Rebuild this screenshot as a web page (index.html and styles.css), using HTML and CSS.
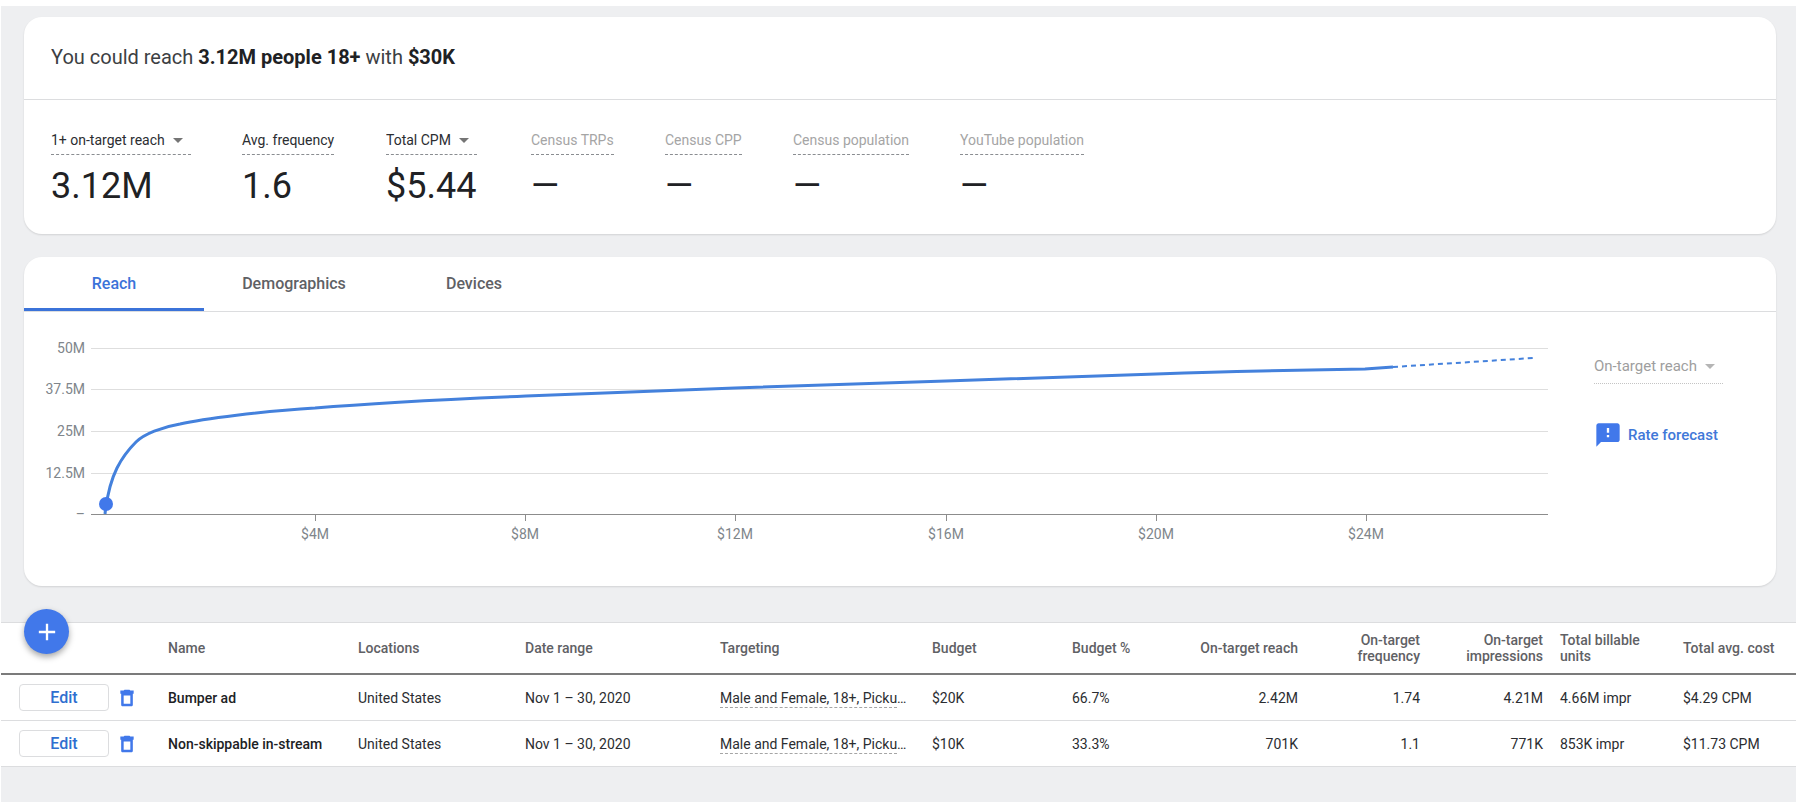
FILE: index.html
```html
<!DOCTYPE html>
<html lang="en">

<head>
    <meta charset="UTF-8">
    <meta name="viewport" content="width=device-width, initial-scale=1.0">
    <title>Reach Planner</title>
    <link rel="stylesheet" href="styles.css">
</head>

<body>
    <main class="page">
        <section class="card">
            <h1 class="headline">You could reach <b>3.12M people 18+</b> with <b>$30K</b></h1>
            <div class="metrics">
                <div class="metric">
                    <span class="dropdown">
                        <select aria-label="Reach metric">
                            <option>1+ on-target reach</option>
                        </select>
                    </span>
                    <span class="value">3.12M</span>
                </div>
                <div class="metric">
                    <span class="label">Avg. frequency</span>
                    <span class="value">1.6</span>
                </div>
                <div class="metric">
                    <span class="dropdown">
                        <select aria-label="Cost metric">
                            <option>Total CPM</option>
                        </select>
                    </span>
                    <span class="value">$5.44</span>
                </div>
                <div class="metric">
                    <span class="label muted">Census TRPs</span>
                    <span class="value">—</span>
                </div>
                <div class="metric">
                    <span class="label muted">Census CPP</span>
                    <span class="value">—</span>
                </div>
                <div class="metric">
                    <span class="label muted">Census population</span>
                    <span class="value">—</span>
                </div>
                <div class="metric">
                    <span class="label muted">YouTube population</span>
                    <span class="value">—</span>
                </div>
            </div>
        </section>

        <section class="card">
            <nav class="tabs">
                <button class="tab active">Reach</button>
                <button class="tab">Demographics</button>
                <button class="tab">Devices</button>
            </nav>
            <div class="forecast">
                <svg class="chart" viewBox="0 0 1524 274" role="img" aria-label="Reach by budget">
                    <g class="grid">
                        <path d="M67 36H1524M67 77H1524M67 119H1524M67 161H1524" />
                    </g>
                    <g class="axis">
                        <path d="M67 202H1524M291 202V209M501 202V209M711 202V209M922 202V209M1132 202V209M1342 202V209" />
                    </g>
                    <g class="y-labels">
                        <text x="61" y="41">50M</text>
                        <text x="61" y="82">37.5M</text>
                        <text x="61" y="124">25M</text>
                        <text x="61" y="166">12.5M</text>
                        <text x="61" y="207">–</text>
                    </g>
                    <g class="x-labels">
                        <text x="291" y="227">$4M</text>
                        <text x="501" y="227">$8M</text>
                        <text x="711" y="227">$12M</text>
                        <text x="922" y="227">$16M</text>
                        <text x="1132" y="227">$20M</text>
                        <text x="1342" y="227">$24M</text>
                    </g>
                    <path class="curve" d="M81 202C82 193 85 172 93 156C99 144 107 135 112 130C120 122 138 115 156 112C178 107 240 99 291 96C350 91 430 87 502 84C570 81 640 79 711 76L922 69L1132 62Q1190 60 1237 59L1341 57L1369 55" />
                    <path class="curve projected" d="M1369 55L1509 46" />
                    <circle class="point" cx="82" cy="192" r="7" />
                </svg>
                <aside class="side">
                    <span class="dropdown disabled">
                        <select aria-label="Chart metric" disabled>
                            <option>On-target reach</option>
                        </select>
                    </span>
                    <a class="rate" href="#">
                        <svg width="28" height="28" viewBox="0 0 24 24">
                            <path d="M20 2H4c-1.100 0-1.990.9-1.990 2L2 22l4-4h14c1.100 0 2-.9 2-2V4c0-1.100-.9-2-2-2zm-7 12h-2v-2h2v2zm0-4h-2V6h2v4z" />
                        </svg>
                        Rate forecast
                    </a>
                </aside>
            </div>
        </section>

        <section class="plan">
            <button class="fab" aria-label="Add">
                <svg width="28" height="28" viewBox="0 0 24 24">
                    <path d="M19 13h-6v6h-2v-6H5v-2h6V5h2v6h6v2z" />
                </svg>
            </button>
            <table>
                <colgroup>
                    <col class="c-actions">
                    <col class="c-name">
                    <col class="c-locations">
                    <col class="c-dates">
                    <col class="c-targeting">
                    <col class="c-budget">
                    <col class="c-percent">
                    <col class="c-reach">
                    <col class="c-frequency">
                    <col class="c-impressions">
                    <col class="c-units">
                    <col class="c-cost">
                </colgroup>
                <thead>
                    <tr>
                        <td></td>
                        <th>Name</th>
                        <th>Locations</th>
                        <th>Date range</th>
                        <th>Targeting</th>
                        <th>Budget</th>
                        <th>Budget %</th>
                        <th class="num">On-target reach</th>
                        <th class="num">On-target<br>frequency</th>
                        <th class="num">On-target<br>impressions</th>
                        <th class="units">Total billable<br>units</th>
                        <th>Total avg. cost</th>
                    </tr>
                </thead>
                <tbody>
                    <tr>
                        <td>
                            <div class="actions">
                                <button class="edit">Edit</button>
                                <button class="delete" aria-label="Delete Bumper ad">
                                    <svg width="20" height="20" viewBox="0 0 24 24">
                                        <path d="M15 2l1 1h4v4H4V3h4l1-1zM5 7h14v13c0 1.100-.9 2-2 2H7c-1.100 0-2-.9-2-2zM8 9v10h8V9z" />
                                    </svg>
                                </button>
                            </div>
                        </td>
                        <td class="name">Bumper ad</td>
                        <td>United States</td>
                        <td>Nov 1 – 30, 2020</td>
                        <td><span class="hint">Male and Female, 18+, Picku</span>…</td>
                        <td>$20K</td>
                        <td>66.7%</td>
                        <td class="num">2.42M</td>
                        <td class="num">1.74</td>
                        <td class="num">4.21M</td>
                        <td class="units">4.66M impr</td>
                        <td>$4.29 CPM</td>
                    </tr>
                    <tr>
                        <td>
                            <div class="actions">
                                <button class="edit">Edit</button>
                                <button class="delete" aria-label="Delete Non-skippable in-stream">
                                    <svg width="20" height="20" viewBox="0 0 24 24">
                                        <path d="M15 2l1 1h4v4H4V3h4l1-1zM5 7h14v13c0 1.100-.9 2-2 2H7c-1.100 0-2-.9-2-2zM8 9v10h8V9z" />
                                    </svg>
                                </button>
                            </div>
                        </td>
                        <td class="name">Non-skippable in-stream</td>
                        <td>United States</td>
                        <td>Nov 1 – 30, 2020</td>
                        <td><span class="hint">Male and Female, 18+, Picku</span>…</td>
                        <td>$10K</td>
                        <td>33.3%</td>
                        <td class="num">701K</td>
                        <td class="num">1.1</td>
                        <td class="num">771K</td>
                        <td class="units">853K impr</td>
                        <td>$11.73 CPM</td>
                    </tr>
                </tbody>
            </table>
        </section>
    </main>
</body>

</html>
```
FILE: styles.css
```css
* {
    box-sizing: border-box;
}

body {
    margin: 0;
    padding: 6px 2px 3px 1px;
    background-color: #fff;
    color: #2b2d31;
    font-family: Roboto, sans-serif;
    font-size: 14px;
}

button,
select {
    font: inherit;
    color: inherit;
    background: none;
    border: none;
    padding: 0;
    margin: 0;
    cursor: pointer;
}

.page {
    padding: 11px 0 35px;
    background-color: #eeeff1;
}

.card {
    margin: 0 20px 23px 23px;
    background-color: #fff;
    border-radius: 18px;
    box-shadow: 0 1px 2px rgba(0, 0, 0, 0.12);
    overflow: hidden;
}

.headline {
    margin: 0;
    padding: 25px 27px 27px;
    font-size: 20px;
    line-height: 30px;
    font-weight: 400;
    color: #3c4043;
    border-bottom: 1px solid #dcdddf;
}

.headline b {
    font-weight: 700;
    color: #202124;
}

.metrics {
    display: grid;
    grid-template-columns: 191px 144px 145px 134px 128px 167px 1fr;
    padding: 29px 27px 25px;
}

.metric {
    display: flex;
    flex-direction: column;
    align-items: flex-start;
}

.label,
.dropdown {
    height: 26px;
    line-height: 22px;
    border-bottom: 1px dashed #8a8d91;
}

.muted {
    color: #a5a5a5;
}

.value {
    margin-top: 8px;
    font-size: 36px;
    line-height: 46px;
    color: #202124;
}

.dropdown {
    position: relative;
}

.dropdown select {
    display: block;
    height: 22px;
    padding-right: 26px;
    appearance: none;
}

.dropdown::after {
    content: "";
    position: absolute;
    top: 9px;
    right: 8px;
    border: 5px solid transparent;
    border-top-color: #757575;
    border-bottom: none;
    pointer-events: none;
}

.tabs {
    display: flex;
    border-bottom: 1px solid #dcdddf;
}

.tab {
    width: 180px;
    height: 54px;
    padding-bottom: 2px;
    border-top: 3px solid transparent;
    border-bottom: 3px solid transparent;
    font-size: 16px;
    font-weight: 500;
    color: #5f6165;
}

.tab.active {
    color: #3b73d9;
    border-bottom-color: #3b73d9;
}

.forecast {
    display: flex;
    gap: 46px;
}

.chart {
    flex: 1;
    min-width: 0;
}

.chart path {
    fill: none;
}

.grid path {
    stroke: #dedede;
    shape-rendering: crispEdges;
}

.axis path {
    stroke: #8c8c8c;
    shape-rendering: crispEdges;
}

.chart text {
    fill: #80868b;
}

.y-labels {
    text-anchor: end;
}

.x-labels {
    text-anchor: middle;
}

.chart .curve {
    stroke: #4481dc;
    stroke-width: 3;
}

.chart .projected {
    stroke-width: 2;
    stroke-dasharray: 5 4;
}

.point {
    fill: #4178ea;
}

.side {
    width: 182px;
    padding-top: 43px;
    font-size: 15px;
}

.side .dropdown {
    display: inline-block;
    height: 29px;
    border-bottom: 1px dotted #c4c4c4;
}

.dropdown.disabled select {
    color: #9e9e9e;
    opacity: 1;
}

.dropdown.disabled::after {
    border-top-color: #b5b5b5;
}

.rate {
    display: flex;
    align-items: center;
    gap: 6px;
    margin-top: 37px;
    color: #4178d8;
    font-weight: 500;
    text-decoration: none;
}

.rate svg {
    fill: #4178ea;
}

.plan {
    position: relative;
    margin-top: 36px;
}

.fab {
    position: absolute;
    top: -13px;
    left: 23px;
    display: flex;
    align-items: center;
    justify-content: center;
    width: 45px;
    height: 45px;
    border-radius: 50%;
    background-color: #4178ea;
    box-shadow: 0 3px 6px rgba(0, 0, 0, 0.35);
}

.fab svg {
    fill: #fff;
}

table {
    width: 100%;
    table-layout: fixed;
    border-collapse: separate;
    border-spacing: 0;
    background-color: #fff;
    border-top: 1px solid #dcdddf;
}

th,
td {
    padding: 0;
    text-align: left;
    white-space: nowrap;
}

thead th,
thead td {
    height: 52px;
    border-bottom: 2px solid #7b7b7b;
}

th {
    line-height: 16px;
    font-weight: 500;
    color: #5f6165;
}

tbody td {
    height: 46px;
    border-bottom: 1px solid #dcdddf;
}

.num {
    text-align: right;
}

.units {
    padding-left: 17px;
}

.name {
    font-weight: 500;
    color: #202124;
}

.hint {
    padding-bottom: 1px;
    border-bottom: 1px dashed #a5a5a5;
}

.actions {
    display: flex;
    align-items: center;
    gap: 8px;
    padding-left: 18px;
}

.edit {
    width: 90px;
    height: 27px;
    border: 1px solid #dcdddf;
    border-radius: 4px;
    font-size: 16px;
    font-weight: 500;
    color: #2f6fd0;
}

.delete {
    display: flex;
}

.delete svg {
    fill: #4178ea;
    fill-rule: evenodd;
}

.c-actions {
    width: 167px;
}

.c-name {
    width: 190px;
}

.c-locations {
    width: 167px;
}

.c-dates {
    width: 195px;
}

.c-targeting {
    width: 212px;
}

.c-budget,
.c-units {
    width: 140px;
}

.c-percent,
.c-frequency {
    width: 122px;
}

.c-reach {
    width: 104px;
}

.c-impressions {
    width: 123px;
}

.c-cost {
    width: 113px;
}
```
